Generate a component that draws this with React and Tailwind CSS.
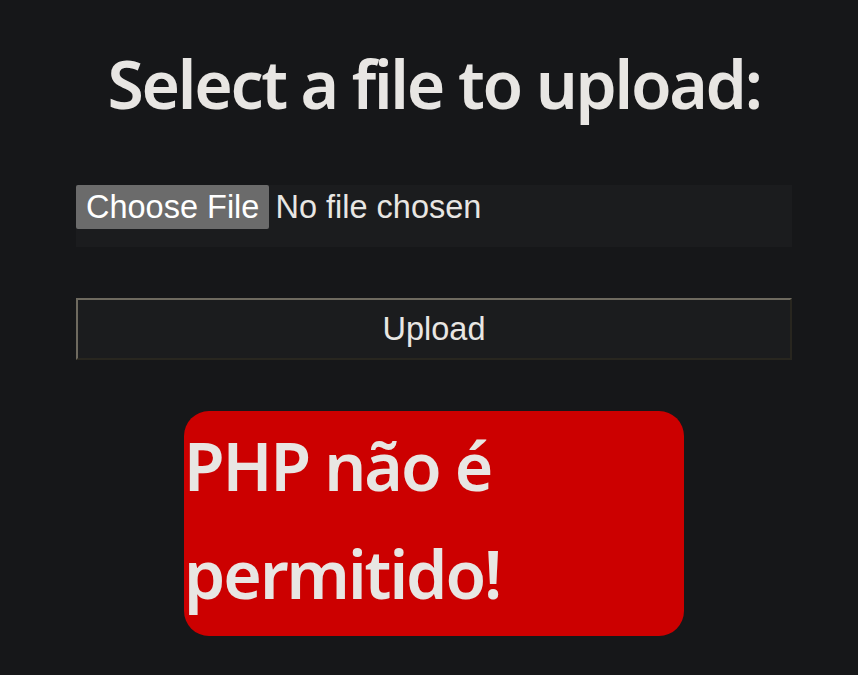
import React from "react";

const App = () => {
  return (
    <div className="min-h-[675px] w-full bg-[#161719] text-[#e8e6e3]">
      <div className="ml-[76px] flex w-[716px] flex-col pt-[38px]">
        <h1 className="text-center font-['Noto_Sans',sans-serif] text-[66px] font-semibold leading-[90px] tracking-[-2.3px]">
          Select a file to upload:
        </h1>

        {/* file picker row */}
        <div className="mt-[57px] h-[62px] bg-[#1b1c1e] font-['Liberation_Sans',Arial,sans-serif] text-[32.5px] leading-[44px]">
          <div className="flex items-start">
            <span className="h-[44px] rounded-[2px] bg-[#6b6b6b] px-[10px] text-white">
              Choose File
            </span>
            <span className="ml-[6px]">No file chosen</span>
          </div>
        </div>

        <button className="mt-[51px] h-[62px] w-full border-2 border-t-[#6e6a5f] border-l-[#6e6a5f] border-b-[#28261f] border-r-[#28261f] bg-[#1b1c1e] font-['Liberation_Sans',Arial,sans-serif] text-[32.5px] text-[#e8e6e3]">
          Upload
        </button>

        <div className="mx-auto mt-[51px] h-[225px] w-[500px] rounded-[25px] bg-[#cc0000] font-['Noto_Sans',sans-serif] text-[66px] font-semibold leading-[108px] tracking-[-2px]">
          PHP não é permitido!
        </div>
      </div>
    </div>
  );
};

export default App;
